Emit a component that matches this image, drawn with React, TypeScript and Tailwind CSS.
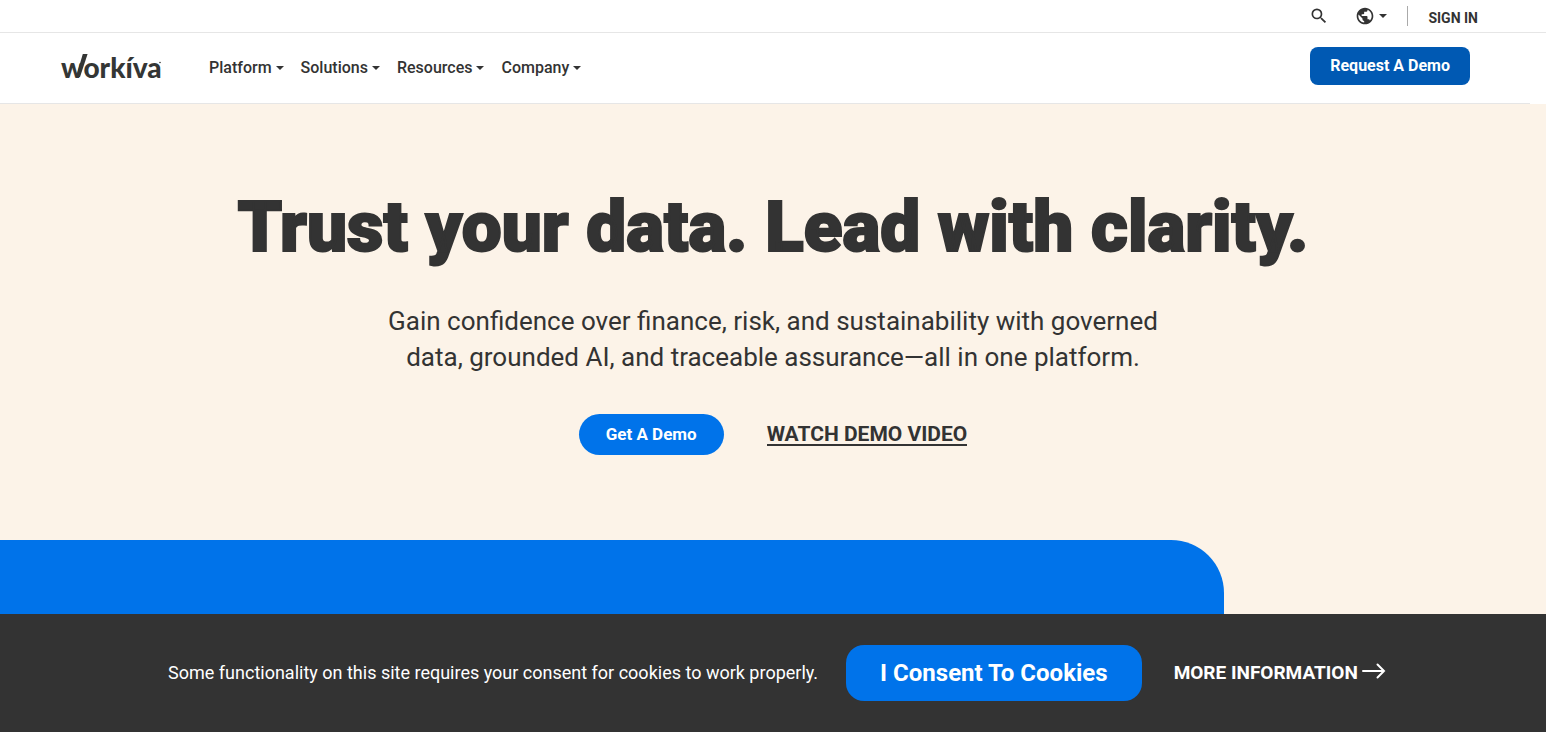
import React from "react";

const NAV = ["Platform", "Solutions", "Resources", "Company"];

function Caret() {
  return (
    <svg width="8" height="4" viewBox="0 0 8 4" fill="currentColor" aria-hidden="true">
      <path d="M0 0h8L4 4z" />
    </svg>
  );
}

function Logo() {
  return (
    <a href="#" aria-label="Workiva" className="relative block h-7 w-[100px] text-[#343635]">
      <span className="block font-['Lato',sans-serif] text-[28px] font-black leading-[26px]">workíva</span>
      <svg className="absolute left-0 top-0" width="100" height="28" viewBox="0 0 100 28" fill="currentColor" aria-hidden="true">
        <path d="M21.8 0H26.6L19 23h-4z" />
        <circle cx="99" cy="8.5" r="0.8" />
      </svg>
    </a>
  );
}

export default function App() {
  return (
    <div className="flex min-h-screen flex-col bg-[#fcf3e8] font-['Roboto',sans-serif] text-[#333333]">
      <header className="bg-white">
        <div className="flex h-[33px] items-center justify-end border-b border-[#e6e6e6] pr-[68px]">
          <button type="button" aria-label="Search" className="mr-[26px]">
            <svg width="20" height="20" viewBox="0 0 24 24" fill="currentColor" aria-hidden="true">
              <path d="M15.5 14h-.79l-.28-.27A6.47 6.47 0 0 0 16 9.5 6.5 6.5 0 1 0 9.5 16c1.61 0 3.09-.59 4.23-1.57l.27.28v.79l5 4.99L20.49 19l-4.99-5zm-6 0C7.01 14 5 11.99 5 9.5S7.01 5 9.5 5 14 7.01 14 9.5 11.99 14 9.5 14z" />
            </svg>
          </button>
          <button type="button" aria-label="Language" className="mr-5 flex items-center gap-1">
            <svg width="20" height="20" viewBox="0 0 24 24" fill="currentColor" aria-hidden="true">
              <path d="M12 2C6.48 2 2 6.48 2 12s4.48 10 10 10 10-4.480 10-10S17.520 2 12 2zm-1 17.930c-3.950-.49-7-3.850-7-7.930 0-.62.080-1.210.21-1.790L9 15v1c0 1.100.9 2 2 2v1.930zm6.900-2.540c-.26-.81-1-1.390-1.900-1.390h-1v-3c0-.55-.45-1-1-1H8v-2h2c.55 0 1-.45 1-1V7h2c1.100 0 2-.9 2-2v-.41c2.930 1.190 5 4.060 5 7.410 0 2.080-.8 3.970-2.100 5.390z" />
            </svg>
            <Caret />
          </button>
          <span className="mr-5 h-5 w-px bg-[#aaaaaa]" />
          <a href="#" className="pt-1 text-sm font-bold">SIGN IN</a>
        </div>
        <nav className="mr-4 flex h-[71px] items-center border-b border-[#e6e6e6] pl-[61px] pr-[60px]">
          <Logo />
          <ul className="ml-12 flex flex-1 gap-[17px]">
            {NAV.map((item) => (
              <li key={item}>
                <button type="button" className="flex items-center gap-1 text-base font-medium">
                  {item}
                  <Caret />
                </button>
              </li>
            ))}
          </ul>
          <a href="#" className="mb-1 rounded-lg bg-[#0059b3] px-5 py-[7px] text-base font-bold text-white">Request A Demo</a>
        </nav>
      </header>

      <main className="flex flex-1 flex-col items-center text-center">
        <h1 className="mt-20 text-[71px] font-black leading-[86px] [-webkit-text-stroke:2px_#333333]">Trust your data. Lead with clarity.</h1>
        <p className="mt-[33px] max-w-[800px] text-[26px] leading-9">
          Gain confidence over finance, risk, and sustainability with governed data, grounded AI, and traceable assurance—all in one platform.
        </p>
        <div className="mt-[39px] flex items-center gap-[43px]">
          <a href="#" className="rounded-full bg-[#0073ea] px-[27px] py-2 text-[17px] font-bold leading-[25px] text-white">Get A Demo</a>
          <a href="#" className="border-b-2 border-[#333333] text-[21px] font-bold leading-5">WATCH DEMO VIDEO</a>
        </div>
        <div className="mt-[85px] min-h-[74px] w-[79.2%] flex-1 self-start rounded-tr-[53px] bg-[#0073ea]" />
      </main>

      <section aria-label="Cookie consent" className="flex h-[118px] items-center justify-center bg-[#333333] pl-2 text-white">
        <p className="text-lg">Some functionality on this site requires your consent for cookies to work properly.</p>
        <button type="button" className="ml-7 rounded-[18px] bg-[#0073ea] px-[34px] py-3 text-2xl font-bold leading-8">I Consent To Cookies</button>
        <a href="#" className="ml-8 flex items-center gap-1 text-[19px] font-bold">
          MORE INFORMATION
          <svg className="mb-1" width="24" height="16" viewBox="0 0 24 16" fill="none" stroke="currentColor" strokeWidth="2" aria-hidden="true">
            <path d="M1 8h21M15.500 1.500l6.500 6.500-6.500 6.500" strokeLinecap="round" />
          </svg>
        </a>
      </section>
    </div>
  );
}
